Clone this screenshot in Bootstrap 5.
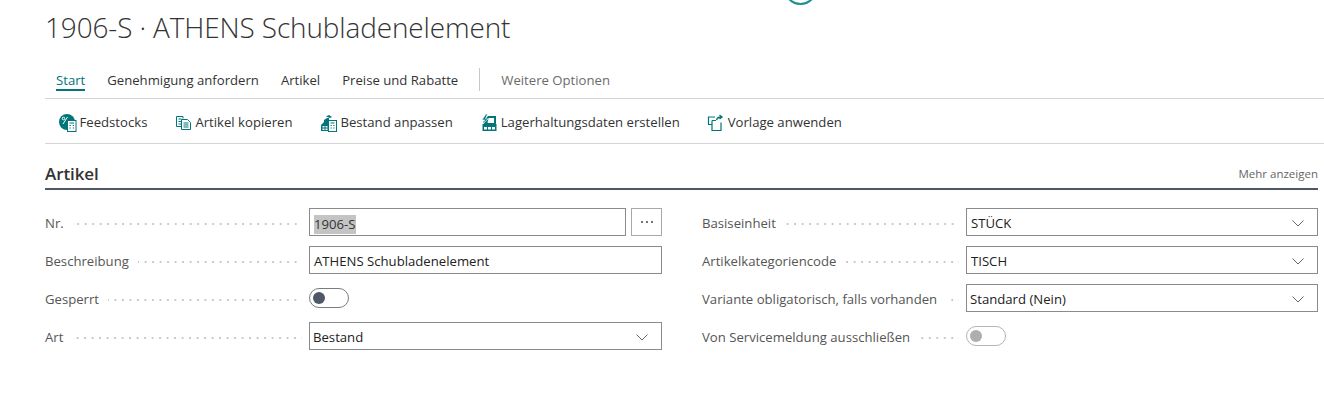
<!DOCTYPE html>
<html lang="de">
<head>
<meta charset="utf-8">
<title>1906-S · ATHENS Schubladenelement</title>
<link href="https://cdn.jsdelivr.net/npm/bootstrap@5.3.0/dist/css/bootstrap.min.css" rel="stylesheet">
<style>
html,body{height:400px;overflow:hidden;background:#fff}
body{font-family:"Open Sans","Noto Sans",sans-serif;font-size:13.15px;color:#212121}
.page-wrap{padding:0 6px 0 45px;position:relative}
.top-arc{position:absolute;left:784px;top:-28px;width:33px;height:33px;border:2px solid #1f8f8f;border-radius:50%}
.page-title{font-weight:300;font-size:27.9px;line-height:36px;margin:0;padding-top:9px;color:#333;letter-spacing:-.1px}
.tab-row{margin-top:17px;margin-right:-6px;height:37px;padding-bottom:1px;border-bottom:1px solid #d5d5d5;padding-left:11px;align-items:center;gap:22px}
.tab-item{color:#333;line-height:18px;position:relative;white-space:nowrap}
.tab-item.on{color:#00757a}
.tab-item.on::after{content:"";position:absolute;left:0;right:0;bottom:-2px;height:2px;background:#00757a}
.tab-sep{width:1px;height:23px;background:#c8c8c8;margin-right:-1px;margin-left:-1px}
.tab-more{color:#6b6b6b}
.tool-row{margin-right:-6px;height:45px;border-bottom:1px solid #d5d5d5;padding:4px 0 0 14px;align-items:center;gap:27.5px}
.tool-item{display:flex;align-items:center;gap:2.5px;color:#333;white-space:nowrap}
.tool-item svg{width:18px;height:18px;flex:none}
.sec-head{margin-top:17px;height:29px;padding-bottom:2px;border-bottom:2px solid #505868;align-items:center;justify-content:space-between}
.sec-title{font-weight:600;font-size:17px;color:#333;letter-spacing:-.1px}
.sec-more{font-size:11.5px;color:#666}
.form-cols{margin-top:18px;gap:40px}
.form-col{width:617px;flex:none;display:flex;flex-direction:column;gap:10px}
.form-col.wide{width:616px}
.field-row{display:flex;height:28px;align-items:center}
.field-label{width:264px;height:28px;padding-top:4px;flex:none;display:flex;align-items:center;color:#555;white-space:nowrap}
.leader{flex:1;height:2px;margin:0 7px 0 9px;background:radial-gradient(circle at 1px 1px,#c9c9c9 1px,transparent 1.2px) right/7.5px 2px repeat-x}
.box{flex:1;height:28px;border:1px solid #8a8a8a;padding:4px 4px 0;display:flex;align-items:center;color:#212121;white-space:nowrap;min-width:0}
.box.dd{justify-content:space-between;padding:4px 13px 0 4px}
.box.dd.tight{padding-left:3px}
.box.dd svg{width:12px;height:7px;flex:none;margin-top:-2px}
.sel-text{background:#c4c4c4;color:#333;line-height:19px}
.dots-btn{width:31px;height:28px;border:1px solid #a8a8a8;margin-left:5px;display:flex;align-items:center;justify-content:center;gap:3px;flex:none}
.dots-btn i{width:2px;height:2px;background:#444;border-radius:50%}
.switcher{width:40px;height:20px;border:1px solid #7c7c80;border-radius:10px;display:flex;align-items:center;padding-left:3px}
.switcher i{width:12px;height:12px;border-radius:50%;background:#505868}
.switcher.off{border-color:#b5b5b5}
.switcher.off i{background:#aeaeb2}
</style>
</head>
<body>
<div class="page-wrap">
  <div class="top-arc"></div>
  <h1 class="page-title">1906-S · ATHENS Schubladenelement</h1>

  <div class="d-flex tab-row">
    <span class="tab-item on">Start</span>
    <span class="tab-item">Genehmigung anfordern</span>
    <span class="tab-item">Artikel</span>
    <span class="tab-item">Preise und Rabatte</span>
    <span class="tab-sep"></span>
    <span class="tab-item tab-more">Weitere Optionen</span>
  </div>

  <div class="d-flex tool-row">
    <span class="tool-item">
      <svg viewBox="0 0 18 18"><circle cx="8" cy="8" r="8" fill="#00757a"/><path d="M4 10 8.500 3" stroke="#fff"/><circle cx="4.500" cy="4.500" r="1.300" fill="none" stroke="#fff"/><rect x="8.500" y="6.500" width="8.500" height="11" fill="#fff" stroke="#00757a"/><path d="M10.500 9h4.500M10.500 11.500h1.200M13.800 11.500H15M10.500 14h1.200M13.800 14H15" stroke="#00757a" stroke-width="1.200"/></svg>
      Feedstocks</span>
    <span class="tool-item">
      <svg viewBox="0 0 18 18" fill="none" stroke="#00757a"><path d="M1.500 2.500h6.500v2M1.500 2.500v10h4.500M3.500 5h3M3.500 7.500h2.500M3.500 10h2.500"/><path d="M6.500 5.500h6l3 3v7h-9zM8.500 9h5M8.500 11h5M8.500 13h5"/></svg>
      Artikel kopieren</span>
    <span class="tool-item">
      <svg viewBox="0 0 18 18"><path d="M1 11 4 8V6l3-2h2v13H1z" fill="#00757a"/><path d="M6 2.500 9 1l3 2-2 1z" fill="#00757a"/><path d="M2.500 12h2v1.500h-2zM2.500 14.500h2V16h-2zM5.500 12h2v1.500h-2zM5.500 14.500h2V16h-2z" fill="#fff"/><rect x="8.500" y="6.500" width="8" height="11" fill="#fff" stroke="#00757a"/><path d="M10.500 9h4M10.500 11.500h1.200M13.300 11.500h1.200M10.500 14h1.200M13.300 14h1.200" stroke="#00757a" stroke-width="1.200"/></svg>
      Bestand anpassen</span>
    <span class="tool-item">
      <svg viewBox="0 0 18 18"><path d="M3 8 8 2h8v8H4z" fill="#00757a"/><path d="M8.500 4H14v5H7.500z" fill="#fff"/><path d="M6 0 2 6h3L3 10l5-5H5.500L7.500 0z" fill="#00757a" stroke="#fff" stroke-width=".6"/><rect x="2.500" y="10" width="14" height="7" fill="#00757a"/><path d="M4 13h3v2.500H4zM8 13h3v2.500H8zM12 13h3v2.500h-3z" fill="#fff"/></svg>
      Lagerhaltungsdaten erstellen</span>
    <span class="tool-item">
      <svg viewBox="0 0 18 18" fill="none" stroke="#00757a" stroke-width="1.200"><path d="M8 3H1.500v7.500h3.500M5 6.500h4M5 6.500V16.500h9v-8"/><path d="M9.500 6c.5-2 2-3 4.500-3M12.500 1 15 3l-2.500 2" stroke-width="1.300"/></svg>
      Vorlage anwenden</span>
  </div>

  <div class="d-flex sec-head">
    <span class="sec-title">Artikel</span>
    <span class="sec-more">Mehr anzeigen</span>
  </div>

  <div class="d-flex form-cols">
    <div class="form-col">
      <div class="field-row">
        <div class="field-label">Nr.<span class="leader"></span></div>
        <div class="box"><span class="sel-text">1906-S</span></div>
        <div class="dots-btn"><i></i><i></i><i></i></div>
      </div>
      <div class="field-row">
        <div class="field-label">Beschreibung<span class="leader"></span></div>
        <div class="box">ATHENS Schubladenelement</div>
      </div>
      <div class="field-row">
        <div class="field-label">Gesperrt<span class="leader"></span></div>
        <div class="switcher"><i></i></div>
      </div>
      <div class="field-row">
        <div class="field-label">Art<span class="leader"></span></div>
        <div class="box dd tight">Bestand<svg viewBox="0 0 12 7" fill="none" stroke="#666"><path d="M.5.5 6 6l5.500-5.500"/></svg></div>
      </div>
    </div>
    <div class="form-col wide">
      <div class="field-row">
        <div class="field-label">Basiseinheit<span class="leader"></span></div>
        <div class="box dd">STÜCK<svg viewBox="0 0 12 7" fill="none" stroke="#666"><path d="M.5.5 6 6l5.500-5.500"/></svg></div>
      </div>
      <div class="field-row">
        <div class="field-label">Artikelkategoriencode<span class="leader"></span></div>
        <div class="box dd">TISCH<svg viewBox="0 0 12 7" fill="none" stroke="#666"><path d="M.5.5 6 6l5.500-5.500"/></svg></div>
      </div>
      <div class="field-row">
        <div class="field-label">Variante obligatorisch, falls vorhanden<span class="leader"></span></div>
        <div class="box dd tight">Standard (Nein)<svg viewBox="0 0 12 7" fill="none" stroke="#666"><path d="M.5.5 6 6l5.500-5.500"/></svg></div>
      </div>
      <div class="field-row">
        <div class="field-label">Von Servicemeldung ausschließen<span class="leader"></span></div>
        <div class="switcher off"><i></i></div>
      </div>
    </div>
  </div>
</div>
<script src="https://cdn.jsdelivr.net/npm/bootstrap@5.3.0/dist/js/bootstrap.bundle.min.js"></script>
</body>
</html>
